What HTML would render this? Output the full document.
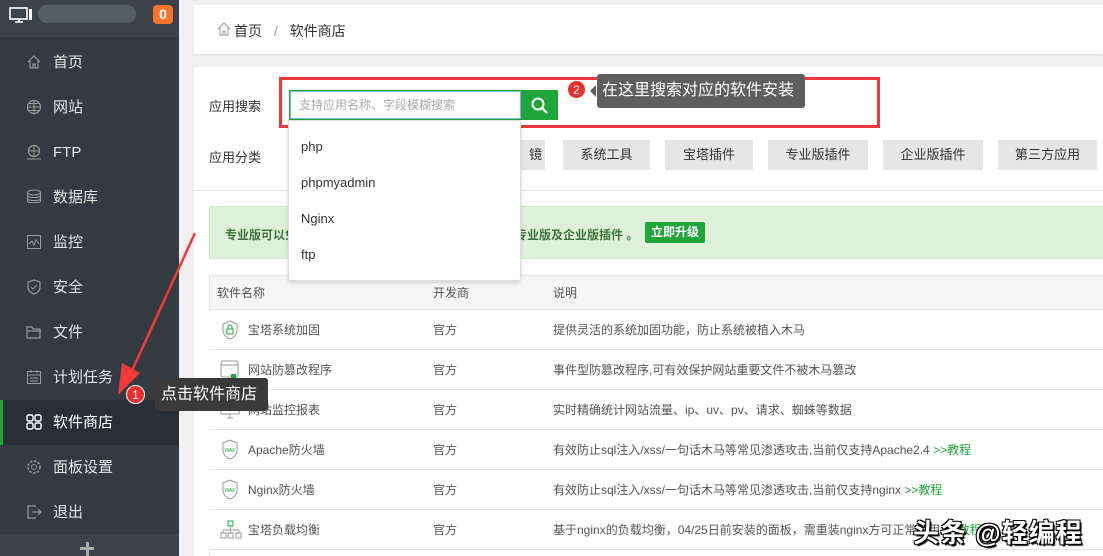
<!DOCTYPE html>
<html><head><meta charset="utf-8"><style>
*{margin:0;padding:0;box-sizing:border-box}
body{width:1103px;height:556px;overflow:hidden;background:#f0f0f0;font-family:"Liberation Sans","Noto Sans CJK SC",sans-serif;position:relative;font-size:13px;color:#333}
.abs{position:absolute}
#side{left:0;top:0;width:179px;height:556px;background:#333a41}
#top{left:0;top:0;width:179px;height:37px;background:#3b4249}
#bot{left:0;top:534px;width:179px;height:22px;background:#3b4249}
.mi{position:absolute;left:0;width:179px;height:45px;color:#e4e4e4;font-size:15px;line-height:45px;padding-left:53px}
.mi svg{position:absolute;left:26px;top:14px}
.act{background:#2a2f35;border-left:3px solid #20a53a;padding-left:50px;color:#fff}
.act svg{left:23px}
.cat{position:absolute;top:140px;height:30px;background:#e6e6e6;font-size:13px;line-height:30px;text-align:center;color:#333}
.row{position:absolute;left:209px;width:894px;height:40px;border-bottom:1px solid #e5e5e5;background:#fff;font-size:12px;color:#555;line-height:40px}
.row span{position:absolute}
.dd{font-size:13px;color:#333;position:absolute;left:301px}
.tip{background:#555;color:#fff;font-size:16px;border-radius:3px;position:absolute}
.badge{position:absolute;width:19px;height:19px;border-radius:50%;background:#e8302c;color:#fff;font-size:12px;text-align:center;line-height:19px;border:1px solid #fff}
</style></head><body>
<div id="side" class="abs"></div>
<div id="top" class="abs"></div>
<div id="bot" class="abs"></div>
<svg class="abs" style="left:9px;top:7px" width="24" height="16"><rect x="1" y="1" width="17" height="11" fill="none" stroke="#fff" stroke-width="1.6"/><path d="M6 15h8M10 12v3" stroke="#fff" stroke-width="1.6"/><rect x="20" y="2" width="3" height="11" fill="#fff"/></svg>
<div class="abs" style="left:38px;top:5px;width:98px;height:18px;border-radius:9px;background:#555d66"></div>
<div class="abs" style="left:153px;top:5px;width:20px;height:19px;background:#f6742e;border-radius:4px;color:#fff;font-weight:bold;font-size:14px;text-align:center;line-height:19px">0</div>
<div class="abs" style="left:80px;top:547px;width:14px;height:3px;background:#aaa"></div>
<div class="abs" style="left:86px;top:542px;width:3px;height:14px;background:#aaa"></div>

<div class="mi" style="top:40px"><svg width="16" height="16"><path d="M2 8L8 2l6 6M4 7v7h3v-4h2v4h3V7" fill="none" stroke="#999" stroke-width="1.2"/></svg>首页</div>
<div class="mi" style="top:85px"><svg width="16" height="16"><circle cx="8" cy="8" r="6.5" fill="none" stroke="#999" stroke-width="1.2"/><path d="M1.5 8h13M8 1.5v13M3 4.5h10M3 11.5h10" stroke="#999"/></svg>网站</div>
<div class="mi" style="top:130px"><svg width="16" height="16"><circle cx="8" cy="7" r="5.5" fill="none" stroke="#999" stroke-width="1.2"/><path d="M2 7h12M8 1.5v11M1 15h14" stroke="#999"/></svg>FTP</div>
<div class="mi" style="top:175px"><svg width="16" height="16"><ellipse cx="8" cy="3.5" rx="6.5" ry="2.5" fill="none" stroke="#999"/><path d="M1.5 3.5v9c0 1.5 13 1.5 13 0v-9M1.5 7c0 2 13 2 13 0M1.5 10c0 2 13 2 13 0" fill="none" stroke="#999"/></svg>数据库</div>
<div class="mi" style="top:220px"><svg width="16" height="16"><rect x="1.5" y="1.5" width="13" height="13" fill="none" stroke="#999"/><path d="M3 10l3-3 2 4 2-5 3 4" fill="none" stroke="#999"/></svg>监控</div>
<div class="mi" style="top:265px"><svg width="16" height="16"><path d="M8 1l6 2v5c0 4-3 6-6 7-3-1-6-3-6-7V3z" fill="none" stroke="#999" stroke-width="1.2"/><path d="M5 8l2 2 4-4" fill="none" stroke="#999"/></svg>安全</div>
<div class="mi" style="top:310px"><svg width="16" height="16"><path d="M1 3h5l1 2h7v9H1z M1 7h14" fill="none" stroke="#999" stroke-width="1.2"/></svg>文件</div>
<div class="mi" style="top:355px"><svg width="16" height="16"><rect x="1.5" y="2.5" width="13" height="12" fill="none" stroke="#999"/><path d="M1.5 6h13M5 1v3M11 1v3M4 9h8M4 12h8" stroke="#999"/></svg>计划任务</div>
<div class="mi act" style="top:400px"><svg width="16" height="16"><rect x="1" y="1" width="6" height="6" rx="1.5" fill="none" stroke="#fff" stroke-width="1.4"/><rect x="9" y="1" width="6" height="6" rx="1.5" fill="none" stroke="#fff" stroke-width="1.4"/><rect x="1" y="9" width="6" height="6" rx="1.5" fill="none" stroke="#fff" stroke-width="1.4"/><rect x="9" y="9" width="6" height="6" rx="1.5" fill="none" stroke="#fff" stroke-width="1.4"/></svg>软件商店</div>
<div class="mi" style="top:445px"><svg width="16" height="16"><circle cx="8" cy="8" r="2.5" fill="none" stroke="#999"/><circle cx="8" cy="8" r="6" fill="none" stroke="#999" stroke-width="1.6" stroke-dasharray="2.5 1.5"/></svg>面板设置</div>
<div class="mi" style="top:490px"><svg width="16" height="16"><path d="M10 2H2v12h8M6 8h9M12 5l3 3-3 3" fill="none" stroke="#999" stroke-width="1.2"/></svg>退出</div>

<div class="abs" style="left:194px;top:5px;width:909px;height:49px;background:#fff;box-shadow:0 1px 2px #ddd"></div>
<svg class="abs" style="left:217px;top:22px" width="14" height="14"><path d="M1 7L7 1l6 6M3 6v7h3V9h2v4h3V6" fill="none" stroke="#999"/></svg>
<div class="abs" style="left:234px;top:21px;font-size:14px;color:#333">首页 <span style="color:#999;margin:0 8px">/</span> 软件商店</div>

<div class="abs" style="left:194px;top:67px;width:909px;height:489px;background:#fff"></div>
<div class="abs" style="left:209px;top:96px;font-size:13px">应用搜索</div>
<div class="abs" style="left:209px;top:147px;font-size:13px">应用分类</div>
<div class="cat" style="left:447px;width:98px;text-align:right;padding-right:3px">镜</div>
<div class="cat" style="left:563px;width:87px">系统工具</div>
<div class="cat" style="left:665px;width:88px">宝塔插件</div>
<div class="cat" style="left:768px;width:100px">专业版插件</div>
<div class="cat" style="left:883px;width:100px">企业版插件</div>
<div class="cat" style="left:998px;width:99px">第三方应用</div>
<div class="abs" style="left:194px;top:190px;width:909px;height:1px;background:#e2e2e2"></div>
<div class="abs" style="left:209px;top:206px;width:894px;height:53px;background:#dff0d8;border:1px solid #d0e9c6;border-right:none;border-radius:2px 0 0 2px"></div>
<div class="abs" style="left:225px;top:226px;font-size:12px;font-weight:bold;color:#3c763d">专业版可以免费</div>
<div class="abs" style="left:515px;top:226px;font-size:12px;font-weight:bold;color:#3c763d">专业版及企业版插件 。</div>
<div class="abs" style="left:645px;top:222px;width:60px;height:21px;background:#20a53a;color:#fff;font-size:12px;font-weight:bold;text-align:center;line-height:21px;border-radius:2px">立即升级</div>

<div class="abs" style="left:209px;top:275px;width:894px;height:35px;background:#f5f5f5;border-top:1px solid #e5e5e5;border-bottom:1px solid #e5e5e5;font-size:12px;color:#555;line-height:34px"><span style="position:absolute;left:8px">软件名称</span><span style="position:absolute;left:224px">开发商</span><span style="position:absolute;left:344px">说明</span></div>
<div class="abs" style="left:209px;top:275px;width:1px;height:281px;background:#e5e5e5"></div>

<div class="row" style="top:310px"><svg style="position:absolute;left:12px;top:10px" width="18" height="20"><path d="M9 1l7 3v6c0 5-4 8-7 9-3-1-7-4-7-9V4z" fill="none" stroke="#999"/><rect x="6" y="9" width="6" height="5" fill="none" stroke="#20a53a"/><path d="M7 9V7a2 2 0 014 0v2" fill="none" stroke="#20a53a"/></svg><span style="left:39px">宝塔系统加固</span><span style="left:224px">官方</span><span style="left:344px">提供灵活的系统加固功能，防止系统被植入木马</span></div>
<div class="row" style="top:350px"><svg style="position:absolute;left:11px;top:10px" width="20" height="20"><rect x="1" y="1" width="17" height="16" rx="2" fill="none" stroke="#999"/><path d="M1 5h17" stroke="#999"/><rect x="11" y="14" width="5" height="5" fill="#20a53a"/></svg><span style="left:39px">网站防篡改程序</span><span style="left:224px">官方</span><span style="left:344px">事件型防篡改程序,可有效保护网站重要文件不被木马篡改</span></div>
<div class="row" style="top:390px"><svg style="position:absolute;left:11px;top:10px" width="20" height="20"><rect x="1" y="1" width="18" height="13" fill="none" stroke="#999"/><path d="M7 18h6M10 14v4" stroke="#999"/><path d="M3 10l4-4 3 3 3-3 4 4" fill="none" stroke="#20a53a"/></svg><span style="left:39px">网站监控报表</span><span style="left:224px">官方</span><span style="left:344px">实时精确统计网站流量、ip、uv、pv、请求、蜘蛛等数据</span></div>
<div class="row" style="top:430px"><svg style="position:absolute;left:12px;top:9px" width="18" height="22"><path d="M9 1l7 3v7c0 5-4 8-7 9-3-1-7-4-7-9V4z" fill="none" stroke="#999"/><text x="3.5" y="13" font-size="5" fill="#20a53a" font-family="Liberation Sans">WAF</text></svg><span style="left:39px">Apache防火墙</span><span style="left:224px">官方</span><span style="left:344px">有效防止sql注入/xss/一句话木马等常见渗透攻击,当前仅支持Apache2.4 <span style="position:static;color:#20a53a">&gt;&gt;教程</span></span></div>
<div class="row" style="top:470px"><svg style="position:absolute;left:12px;top:9px" width="18" height="22"><path d="M9 1l7 3v7c0 5-4 8-7 9-3-1-7-4-7-9V4z" fill="none" stroke="#999"/><text x="3.5" y="13" font-size="5" fill="#20a53a" font-family="Liberation Sans">WAF</text></svg><span style="left:39px">Nginx防火墙</span><span style="left:224px">官方</span><span style="left:344px">有效防止sql注入/xss/一句话木马等常见渗透攻击,当前仅支持nginx <span style="position:static;color:#20a53a">&gt;&gt;教程</span></span></div>
<div class="row" style="top:510px"><svg style="position:absolute;left:11px;top:10px" width="22" height="20"><rect x="8" y="1" width="5" height="5" fill="none" stroke="#20a53a"/><path d="M10.5 6v4M3 10h16M3 10v3M10.5 10v3M19 10v3" fill="none" stroke="#999"/><rect x="1" y="13" width="5" height="5" fill="none" stroke="#999"/><rect x="8" y="13" width="5" height="5" fill="none" stroke="#999"/><rect x="16" y="13" width="5" height="5" fill="none" stroke="#999"/></svg><span style="left:39px">宝塔负载均衡</span><span style="left:224px">官方</span><span style="left:344px">基于nginx的负载均衡，04/25日前安装的面板，需重装nginx方可正常使用 <span style="position:static;color:#20a53a">&gt;&gt;教程</span></span></div>

<div class="abs" style="left:289px;top:90px;width:232px;height:30px;border:1px solid #20a53a;border-right:none;background:#fff;font-size:12px;color:#aaa;line-height:28px;padding-left:9px;box-shadow:inset 0 0 0 1px #7fb5d8">支持应用名称、字段模糊搜索</div>
<div class="abs" style="left:521px;top:90px;width:37px;height:30px;background:#20a53a"></div>
<svg class="abs" style="left:530px;top:96px" width="20" height="20"><circle cx="8" cy="8" r="5.5" fill="none" stroke="#fff" stroke-width="2"/><path d="M12 12l5 5" stroke="#fff" stroke-width="2.2"/></svg>
<div class="abs" style="left:279px;top:77px;width:601px;height:51px;border:3px solid #f0383b"></div>
<div class="abs" style="left:288px;top:120px;width:233px;height:161px;background:#fff;border:1px solid #ddd;border-radius:0 0 3px 3px;box-shadow:0 2px 4px rgba(0,0,0,.15)"></div>
<div class="dd" style="top:139px">php</div>
<div class="dd" style="top:175px">phpmyadmin</div>
<div class="dd" style="top:211px">Nginx</div>
<div class="dd" style="top:247px">ftp</div>

<div class="badge" style="left:567px;top:80px">2</div>
<div class="tip" style="left:597px;top:74px;width:208px;height:34px;line-height:34px;padding-left:5px;background:#5e5e5e">在这里搜索对应的软件安装</div>
<div class="abs" style="left:590px;top:85px;width:0;height:0;border:6px solid transparent;border-right-color:#5e5e5e;border-left:none"></div>

<svg class="abs" style="left:100px;top:225px" width="100" height="175"><path d="M95 8L30 150" stroke="#f03a3a" stroke-width="2.5"/><path d="M18 170L22 138 40 148z" fill="#f03a3a"/></svg>
<div class="badge" style="left:126px;top:385px">1</div>
<div class="tip" style="left:155px;top:378px;width:113px;height:33px;line-height:33px;padding-left:6px;background:#3a3a3a">点击软件商店</div>
<div class="abs" style="left:149px;top:389px;width:0;height:0;border:6px solid transparent;border-right-color:#3a3a3a;border-left:none"></div>

<div class="abs" style="left:913px;top:513px;font-size:26px;font-weight:bold;color:#fff;letter-spacing:1px;text-shadow:-1px -1px 0 #000,1px -1px 0 #000,-1px 1px 0 #000,1px 1px 0 #000,2px 2px 1px #000">头条 @轻编程</div>
</body></html>
